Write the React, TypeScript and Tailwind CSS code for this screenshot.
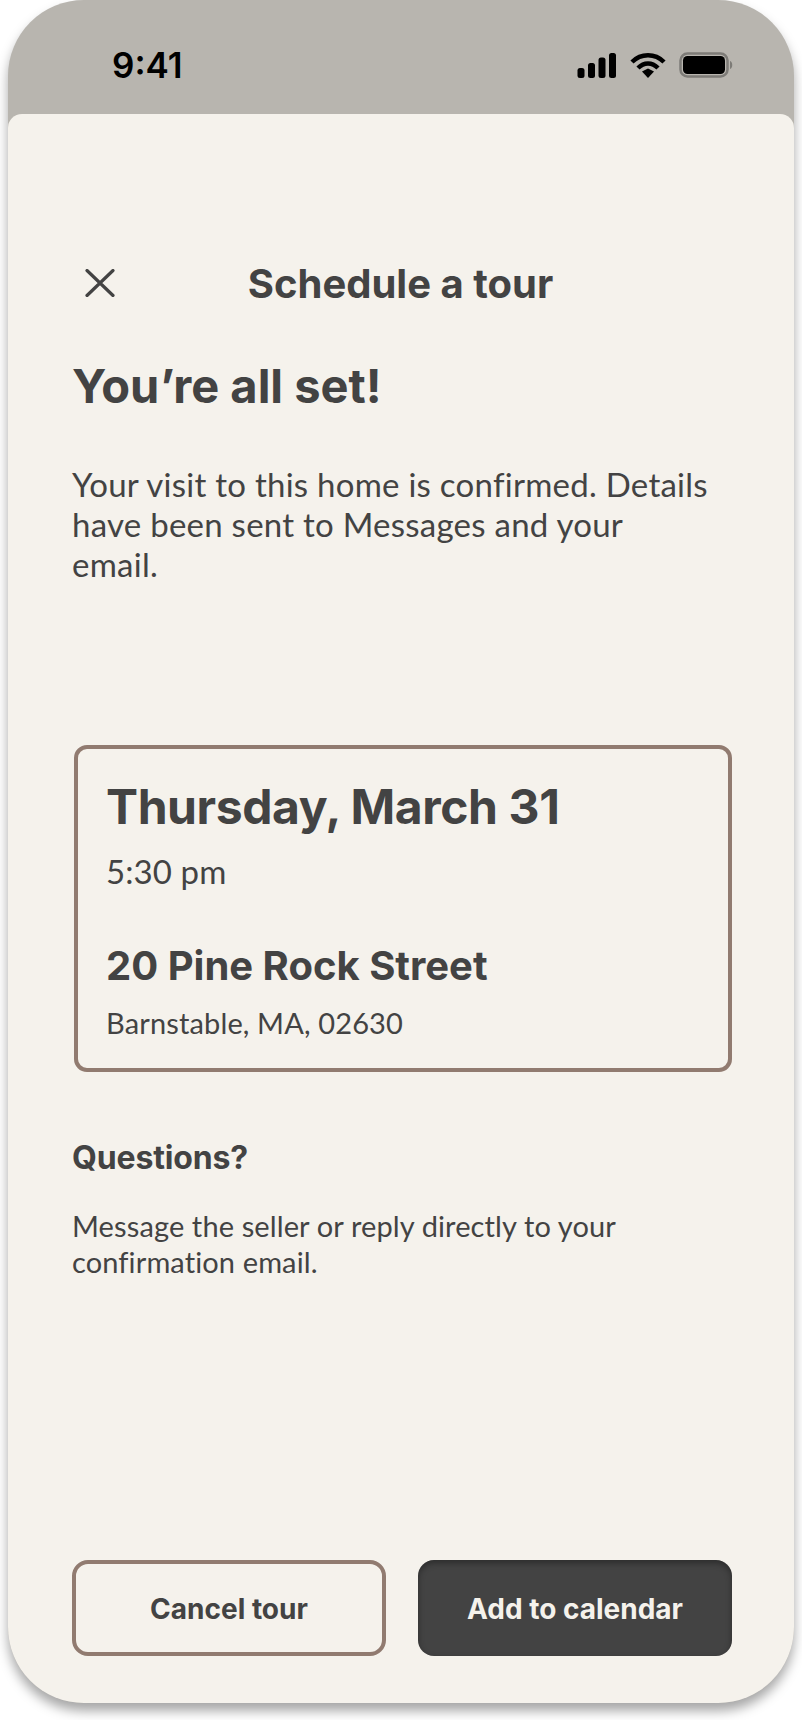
export default function App() {
  return (
    <div className="w-[802px] h-[1720px] bg-white px-2">
      <div className="w-[786px] h-[1703px] rounded-[76px] overflow-hidden bg-[#b8b5af] flex flex-col shadow-[0_8px_12px_rgba(0,0,0,0.35)]">
        <div className="h-[114px] shrink-0 flex items-center justify-between pl-[104px] pr-[59px] pt-[16px]">
          <span className="text-[35px] font-semibold text-black leading-none font-['Inter',sans-serif]">9:41</span>
          <div className="flex items-center gap-[13px]">
            <svg width="41" height="26" viewBox="0 0 40 26" fill="#000">
              <rect x="1" y="16" width="7" height="10" rx="2.5" />
              <rect x="11.5" y="11" width="7" height="15" rx="2.5" />
              <rect x="22" y="5.5" width="7" height="20.5" rx="2.5" />
              <rect x="32.5" y="1" width="7" height="25" rx="2.5" />
            </svg>
            <svg width="36" height="26" viewBox="0 0 36 26" fill="none" stroke="#000" strokeWidth="4.5">
              <path d="M2 10 C11 1 25 1 34 10" />
              <path d="M8 16 C14 10 22 10 28 16" />
              <path d="M12 19.5 L18 16.5 L24 19.5 L18 26 Z" fill="#000" stroke="none" />
            </svg>
            <svg width="56" height="26" viewBox="0 0 56 26" fill="none">
              <rect x="1.5" y="1.5" width="47" height="23" rx="7" stroke="#7d7b77" strokeWidth="2.5" />
              <rect x="4" y="4" width="42" height="18" rx="4.5" fill="#000" />
              <path d="M51 9 C54 10 54 16 51 17 Z" fill="#7d7b77" />
            </svg>
          </div>
        </div>
        <div className="flex-1 bg-[#f5f2ec] rounded-t-[14px] pl-[64px] pr-[62px] flex flex-col">
          <div className="relative mt-[145px] h-[50px] pr-[3px] flex items-center justify-center">
            <svg className="absolute left-[13px] top-[10px]" width="30" height="28" viewBox="0 0 30 28" fill="none" stroke="#434343" strokeWidth="3.2" strokeLinecap="round">
              <path d="M2 1.5 L28 26.5 M28 1.5 L2 26.5" />
            </svg>
            <h2 className="text-[40px] font-bold text-[#434343] leading-none font-['Inter',sans-serif]">Schedule a tour</h2>
          </div>
          <h1 className="mt-[49px] text-[47px] font-bold text-[#434343] leading-[56px] font-['Inter',sans-serif]">You’re all set!</h1>
          <p className="mt-[50px] text-[33px] tracking-[0.25px] text-[#434343] leading-[40px] font-['Lato',sans-serif] pr-[20px]">Your visit to this home is confirmed. Details have been sent to Messages and your email.</p>
          <div className="mt-[161px] ml-[2px] border-4 border-[#917b70] rounded-[13px] h-[327px] pl-[28px] pt-[30px]">
            <div className="text-[48px] font-bold tracking-[-0.4px] text-[#434343] leading-[56px] font-['Inter',sans-serif]">Thursday, March 31</div>
            <div className="mt-[16px] text-[33px] tracking-[0.1px] text-[#434343] leading-[40px] font-['Lato',sans-serif]">5:30 pm</div>
            <div className="mt-[51px] text-[40px] font-bold text-[#434343] leading-[48px] font-['Inter',sans-serif]">20 Pine Rock Street</div>
            <div className="mt-[15px] text-[29px] tracking-[0.14px] text-[#434343] leading-[36px] font-['Lato',sans-serif]">Barnstable, MA, 02630</div>
          </div>
          <h3 className="mt-[66px] text-[32px] font-bold tracking-[-0.15px] text-[#434343] leading-[40px] font-['Inter',sans-serif]">Questions?</h3>
          <p className="mt-[30px] text-[29px] tracking-[0.12px] text-[#434343] leading-[36px] font-['Lato',sans-serif]">Message the seller or reply directly to your confirmation email.</p>
          <div className="mt-auto mb-[47px] flex gap-[32px]">
            <button className="w-[314px] h-[96px] pt-[2px] border-4 border-[#917b70] rounded-[16px] text-[28px] font-bold text-[#434343] font-['Inter',sans-serif]">Cancel tour</button>
            <button className="w-[314px] h-[96px] pt-[2px] rounded-[16px] bg-[#434343] shadow-[inset_0_3px_6px_rgba(0,0,0,0.35)] text-[28px] font-bold text-[#f5f2ec] font-['Inter',sans-serif]">Add to calendar</button>
          </div>
        </div>
      </div>
    </div>
  );
}
